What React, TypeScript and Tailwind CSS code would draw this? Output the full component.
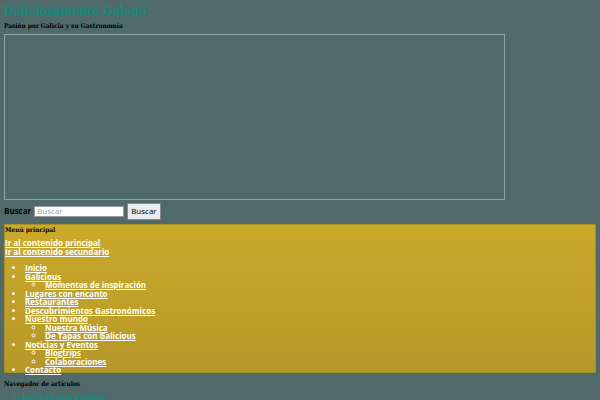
import React from "react";

const slab = { fontFamily: '"DejaVu Serif", "Liberation Serif", serif' };
const sans = { fontFamily: '"Open Sans", "DejaVu Sans", sans-serif' };

type Item = { label: string; children?: string[] };
const menu: Item[] = [
  { label: "Inicio" },
  { label: "Galicious", children: ["Momentos de inspiración"] },
  { label: "Lugares con encanto" },
  { label: "Restaurantes" },
  { label: "Descubrimientos Gastronómicos" },
  { label: "Nuestro mundo", children: ["Nuestra Música", "De Tapas con Galicious"] },
  { label: "Noticias y Eventos", children: ["Blogtrips", "Colaboraciones"] },
  { label: "Contacto" },
];

export default function App() {
  return (
    <div className="w-[600px] h-[400px] overflow-hidden bg-[#4f6a69] px-[4px] pt-[3px]">
      <h1 style={slab} className="text-[12.3px] leading-[16px] font-bold font-stretch-condensed text-[#17897f] m-0">
        Deliciosamente Galego
      </h1>
      <p style={slab} className="text-[6.5px] leading-[9px] font-bold font-stretch-condensed text-black mt-[3px]">
        Pasión por Galicia y su Gastronomía
      </p>
      <div className="mt-[3px] w-[501px] h-[166px] border border-[#8fa4a3]"></div>
      <div className="flex items-center mt-[2px] h-[18px]" style={sans}>
        <span className="text-[8px] font-bold text-black mr-[3px]">Buscar</span>
        <input
          placeholder="Buscar"
          className="w-[90px] h-[11px] bg-white border border-[#9a9a9a] text-[8px] px-[2px] placeholder:text-[#a0a0a0]"
          style={sans}
        />
        <button className="ml-[3px] h-[17px] px-[3px] bg-[#ebebeb] border border-[#8a8a8a] text-[8px] text-black rounded-[1px]">
          Buscar
        </button>
      </div>
      <div className="mt-[4px] w-[592px] h-[149px] border border-[#a89026] bg-gradient-to-b from-[#cba92a] to-[#b59827] pt-[1px]">
        <div style={slab} className="text-[6.5px] leading-[9px] font-bold font-stretch-condensed text-black">
          Menú principal
        </div>
        <div style={sans} className="text-[8px] leading-[8.5px] font-bold text-white mt-[4px]">
          <a className="block underline">Ir al contenido principal</a>
          <a className="block underline">Ir al contenido secundario</a>
          <ul className="list-disc pl-[20px] mt-[8px]">
            {menu.map((m) => (
              <li key={m.label}>
                <a className="underline">{m.label}</a>
                {m.children && (
                  <ul className="list-[circle] pl-[20px]">
                    {m.children.map((c) => (
                      <li key={c}>
                        <a className="underline">{c}</a>
                      </li>
                    ))}
                  </ul>
                )}
              </li>
            ))}
          </ul>
        </div>
      </div>
      <div style={slab} className="text-[6.5px] leading-[9px] font-bold font-stretch-condensed text-black mt-[7px]">
        Navegador de artículos
      </div>
      <div style={sans} className="text-[8px] font-bold text-[#17897f] mt-[3px] pl-[10px]">
        ← Entrada más antigua
      </div>
    </div>
  );
}
